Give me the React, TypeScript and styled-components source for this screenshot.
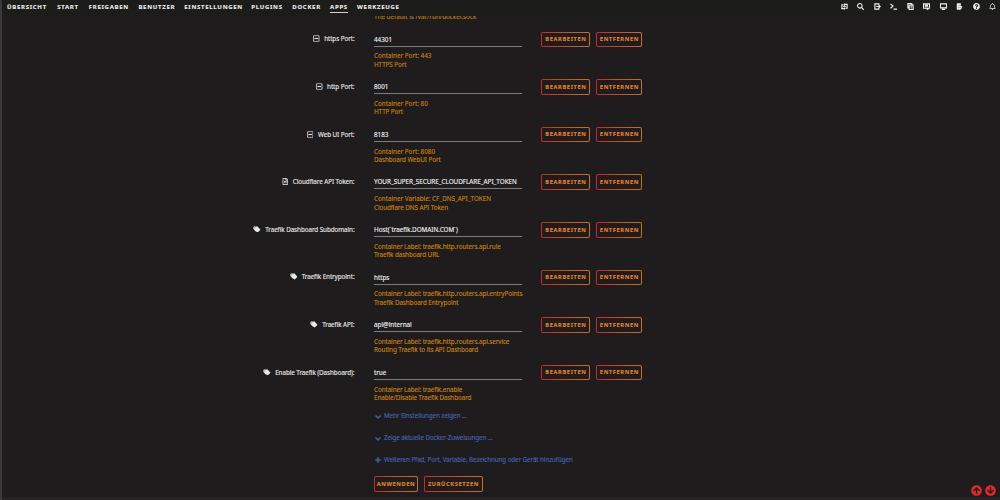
import styled, { createGlobalStyle } from "styled-components";
import {
  FaArrowCircleDown,
  FaArrowCircleUp,
  FaChevronDown,
  FaPlus,
  FaQuestionCircle,
  FaRegBell,
  FaRegFileAlt,
  FaRegMinusSquare,
  FaSearch,
} from "react-icons/fa";

const menu = [
  { name: "Übersicht", width: 50.2 },
  { name: "Start", width: 31.6 },
  { name: "Freigaben", width: 49.6 },
  { name: "Benutzer", width: 45.9 },
  { name: "Einstellungen", width: 67 },
  { name: "Plugins", width: 41 },
  { name: "Docker", width: 37.8 },
  { name: "Apps", width: 27, active: true },
  { name: "Werkzeuge", width: 50 },
];

const settings = [
  {
    icon: "port",
    label: "https Port:",
    value: "44301",
    help: ["Container Port: 443", "HTTPS Port"],
  },
  {
    icon: "port",
    label: "http Port:",
    value: "8001",
    help: ["Container Port: 80", "HTTP Port"],
  },
  {
    icon: "port",
    label: "Web UI Port:",
    value: "8183",
    help: ["Container Port: 8080", "Dashboard WebUI Port"],
  },
  {
    icon: "variable",
    label: "Cloudflare API Token:",
    value: "YOUR_SUPER_SECURE_CLOUDFLARE_API_TOKEN",
    help: ["Container Variable: CF_DNS_API_TOKEN", "Cloudflare DNS API Token"],
  },
  {
    icon: "label",
    label: "Traefik Dashboard Subdomain:",
    value: "Host(`traefik.DOMAIN.COM`)",
    help: [
      "Container Label: traefik.http.routers.api.rule",
      "Traefik dashboard URL",
    ],
  },
  {
    icon: "label",
    label: "Traefik Entrypoint:",
    value: "https",
    help: [
      "Container Label: traefik.http.routers.api.entryPoints",
      "Traefik Dashboard Entrypoint",
    ],
  },
  {
    icon: "label",
    label: "Traefik API:",
    value: "api@internal",
    help: [
      "Container Label: traefik.http.routers.api.service",
      "Routing Traefik to its API Dashboard",
    ],
  },
  {
    icon: "label",
    label: "Enable Traefik (Dashboard):",
    value: "true",
    help: ["Container Label: traefik.enable", "Enable/Disable Traefik Dashboard"],
  },
];

const TagIcon = () => (
  <TagSvg viewBox="0 0 18 15">
    <path
      fillRule="evenodd"
      d="M2 1h9l7 7.5-6.500 6.500L6 12 1 7V2zM3.500 3.200v1.800h1.800V3.200z"
    />
  </TagSvg>
);

const typeIcons = {
  port: <FaRegMinusSquare />,
  variable: <FaRegFileAlt />,
  label: <TagIcon />,
};

const Toolbar = () => {
  return (
    <Tools>
      <svg viewBox="0 0 16 16">
        <path d="M6 4H2v9h5M10 12h4V3H9M8 1v5M8 10v5M5 8h6" />
      </svg>
      <FaSearch />
      <svg viewBox="0 0 16 16">
        <path d="M11 5V2H2v12h9v-3M5 8h9M11 5l3 3-3 3" />
      </svg>
      <svg viewBox="0 0 16 16">
        <path d="m1 2 6 5-6 5M8 14h8" />
      </svg>
      <svg viewBox="0 0 16 16">
        <path d="M5 5h9v10H5zM5 11H2V1h9v4M8 8.5h3M8 11.5h3" />
      </svg>
      <svg viewBox="0 0 16 16">
        <path d="M1 2h14v10h-4v3l-3-3H1zM4 5.5h8M4 8.5h8" />
      </svg>
      <svg viewBox="0 0 16 16">
        <path d="M1 2h14v9H1zM4 14.5h8" />
      </svg>
      <svg viewBox="0 0 16 16">
        <path d="M2 2h9M2 5h9M2 8h12M2 11h12M2 14h9M3 2v12" />
      </svg>
      <FaQuestionCircle />
      <FaRegBell />
    </Tools>
  );
};

const App = () => {
  return (
    <Page>
      <GlobalStyle />
      <Header>
        <Menu>
          {menu.map((item) => (
            <MenuItem key={item.name} $width={item.width}>
              <MenuText $active={item.active}>{item.name}</MenuText>
            </MenuItem>
          ))}
        </Menu>
        <Toolbar />
      </Header>
      <Content>
        <Clipped>
          <p>The default is /var/run/docker.sock</p>
        </Clipped>
        {settings.map((setting) => (
          <Row key={setting.label}>
            <Label>
              {typeIcons[setting.icon as keyof typeof typeIcons]}
              <span>{setting.label}</span>
            </Label>
            <div>
              <Value>{setting.value}</Value>
              <Help>
                {setting.help.map((line, i) => (
                  <HelpLine
                    key={line}
                    $tight={setting.icon === "label" || i === 1}
                  >
                    {line}
                  </HelpLine>
                ))}
              </Help>
            </div>
            <Actions>
              <Button $width={49}>Bearbeiten</Button>
              <Button $width={46}>Entfernen</Button>
            </Actions>
          </Row>
        ))}
        <Links>
          <a>
            <FaChevronDown />
            <span>Mehr Einstellungen zeigen ...</span>
          </a>
          <a>
            <FaChevronDown />
            <span>Zeige aktuelle Docker-Zuweisungen ...</span>
          </a>
          <a>
            <FaPlus />
            <span>
              Weiteren Pfad, Port, Variable, Bezeichnung oder Gerät hinzufügen
            </span>
          </a>
        </Links>
        <Submit>
          <Button $width={44}>Anwenden</Button>
          <Button $width={59}>Zurücksetzen</Button>
        </Submit>
      </Content>
      <Footer />
      <Scroll>
        <FaArrowCircleUp />
        <FaArrowCircleDown />
      </Scroll>
    </Page>
  );
};

const GlobalStyle = createGlobalStyle`
  * {
    box-sizing: border-box;
  }
  body {
    margin: 0;
    background-color: #1e1c1d;
  }
  p {
    margin: 0;
  }
`;

const Page = styled.div`
  position: relative;
  display: flex;
  flex-direction: column;
  width: 1000px;
  height: 500px;
  overflow: hidden;
  border-left: 2px solid #3a3939;
  background-color: #1e1c1d;
  color: #e8e8e8;
  font-family: "Noto Sans", sans-serif;
  font-size: 6.3px;
  line-height: 8.3px;
  white-space: nowrap;
  -webkit-text-stroke: 0.12px currentColor;
`;

const Header = styled.header`
  display: flex;
  justify-content: space-between;
  flex: none;
  height: 16px;
  padding: 2px 4px 0 5px;
  background-color: #1c1c1b;
`;

const Menu = styled.nav`
  display: flex;
`;

const MenuItem = styled.div<{ $width: number }>`
  width: ${(props) => props.$width}px;
`;

const MenuText = styled.span<{ $active?: boolean }>`
  display: inline-block;
  height: 11px;
  border-bottom: 1px solid ${(props) => (props.$active ? "#d0d0d0" : "transparent")};
  color: #ececec;
  font-size: 6px;
  font-weight: 700;
  line-height: 10px;
  letter-spacing: 0.72px;
  text-transform: uppercase;
`;

const Tools = styled.div`
  display: flex;
  gap: 9.5px;
  padding-top: 1px;
  svg {
    width: 7px;
    height: 7px;
    color: #f0f0f0;
  }
  svg[viewBox="0 0 16 16"] {
    fill: none;
    stroke: #f0f0f0;
    stroke-width: 2.6;
  }
`;

const Content = styled.main`
  display: flex;
  flex-direction: column;
  flex: 1;
`;

const Clipped = styled.div`
  display: flex;
  align-items: flex-end;
  height: 5.6px;
  margin-bottom: 10px;
  padding-left: 372px;
  overflow: hidden;
  color: #c07a0c;
`;

const Row = styled.div`
  display: grid;
  grid-template-columns: 353px 148px 1fr;
  column-gap: 19px;
  flex: none;
  height: 47.62px;
`;

const Label = styled.div`
  display: flex;
  justify-content: flex-end;
  gap: 4.5px;
  padding: 3.8px 0.5px 0 0;
  letter-spacing: -0.07px;
  svg {
    width: 6.5px;
    height: 7px;
    stroke: currentColor;
    stroke-width: 10px;
  }
`;

const TagSvg = styled.svg`
  &&& {
    width: 7.5px;
    height: 6.5px;
    fill: currentColor;
    stroke: none;
  }
`;

const Value = styled.div`
  height: 15px;
  padding-top: 4px;
  border-bottom: 1px solid #7d7c7c;
  color: #f2f2f2;
`;

const Help = styled.div`
  padding-top: 5.8px;
  color: #cc8207;
`;

const HelpLine = styled.p<{ $tight: boolean }>`
  letter-spacing: ${(props) => (props.$tight ? "-0.08px" : "0")};
`;

const Actions = styled.div`
  display: flex;
  gap: 6px;
  padding-left: 0.4px;
`;

const Button = styled.button<{ $width: number }>`
  width: ${(props) => props.$width}px;
  height: 15.5px;
  padding: 0.5px 0 0;
  border: 1px solid transparent;
  border-radius: 2px;
  background:
    linear-gradient(#1e1c1d, #1e1c1d) padding-box,
    linear-gradient(90deg, #c8282b, #c4732a) border-box;
  color: #e8812a;
  font-family: inherit;
  font-size: 5.6px;
  font-weight: 700;
  line-height: 13px;
  letter-spacing: 0.68px;
  text-transform: uppercase;
`;

const Links = styled.div`
  display: flex;
  flex-direction: column;
  gap: 13.6px;
  padding: 0 0 0 373px;
  color: #4364b2;
  letter-spacing: -0.1px;
  a {
    display: flex;
    align-items: center;
    gap: 3px;
    height: 8.3px;
  }
  svg {
    width: 6px;
    height: 6px;
    stroke: currentColor;
    stroke-width: 45px;
  }
`;

const Submit = styled.div`
  display: flex;
  gap: 6px;
  padding: 11.8px 0 0 372px;
`;

const Footer = styled.footer`
  flex: none;
  height: 3px;
  background-color: #262425;
`;

const Scroll = styled.div`
  position: absolute;
  right: 4.5px;
  bottom: 4.5px;
  display: flex;
  gap: 3px;
  svg {
    width: 11px;
    height: 11px;
    color: #e22828;
  }
`;

export default App;
